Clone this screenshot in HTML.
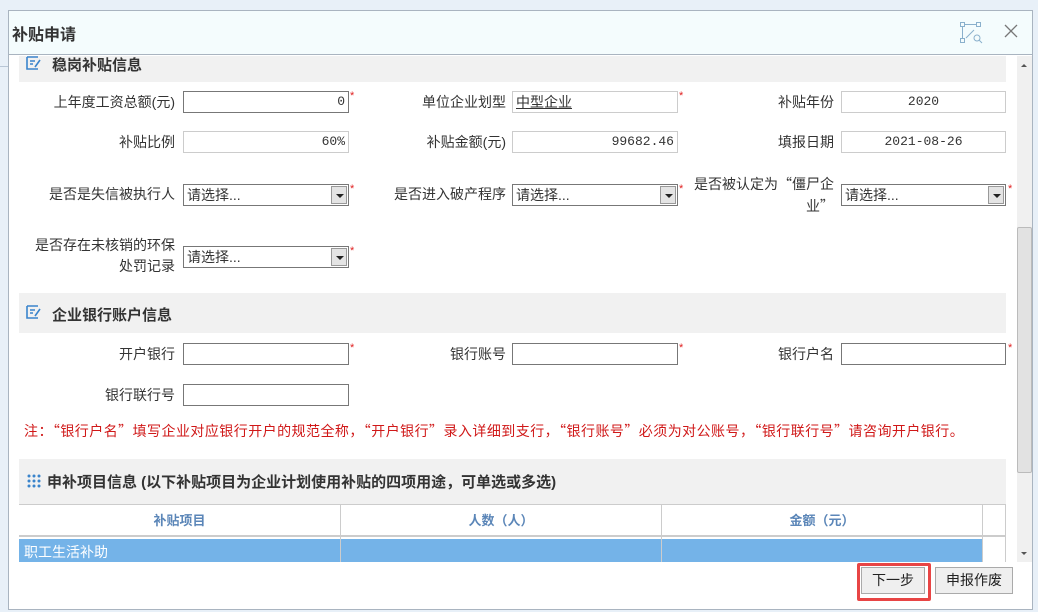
<!DOCTYPE html>
<html><head><meta charset="utf-8"><style>
*{margin:0;padding:0;box-sizing:border-box}
body{width:1038px;height:612px;overflow:hidden;background:#e8f0f8;font-family:"Liberation Sans","Noto Sans CJK SC",sans-serif;font-size:14px;color:#333;position:relative}
.a{position:absolute}
.dlg{left:8px;top:10px;width:1025px;height:600px;background:#fff;border:1px solid #a9b4c0}
.hd{left:9px;top:11px;width:1023px;height:44px;background:#f4fcfd;border-bottom:1px solid #a9b4c0}
.sec{background:#f1f1f1;left:19px;width:987px}
.st{font-weight:bold;font-size:15px;color:#333}
.lb{text-align:right;width:170px;line-height:22px}
.in{height:22px;border:1px solid #777;background:#fff;font-size:13px;line-height:20px;padding:0 3px;font-family:"Liberation Mono",monospace}
.ro{border-color:#ccc}
.sel{height:22px;border:1px solid #777;background:#fff;line-height:20px;padding-left:3px;font-size:14px}
.sel i{position:absolute;right:1px;top:1px;width:16px;height:18px;background:#e4e4e4;border:1px solid #999}
.sel i:after{content:"";position:absolute;left:4px;top:7px;border-left:4px solid transparent;border-right:4px solid transparent;border-top:4px solid #222}
.r{color:#e02020;font-size:11px}
.btn{height:27px;border:1px solid #aaa;background:#efefef;text-align:center;line-height:25px;font-size:14px;color:#222}
.cjk{font-family:"Noto Sans CJK SC","Liberation Sans",sans-serif}
</style></head><body>
<div class="a" style="left:0;top:66px;width:8px;height:1px;background:#b8c6d6"></div>
<div class="a dlg"></div>
<div class="a hd"></div>
<div class="a st" style="left:12px;top:21px;font-size:16px">补贴申请</div>
<svg class="a" style="left:958px;top:20px" width="26" height="26" viewBox="0 0 26 26" fill="none" stroke="#8ab0cc" stroke-width="1"><rect x="2.5" y="2.5" width="4" height="4"/><rect x="18.5" y="2.5" width="4" height="4"/><rect x="2.5" y="18.5" width="4" height="4"/><path d="M7 4.5h11M4.5 7v11M8 18l8-8"/><circle cx="19" cy="18" r="3"/><path d="M21 20l3 3"/></svg>
<svg class="a" style="left:1004px;top:24px" width="14" height="14" viewBox="0 0 14 14" stroke="#777" stroke-width="1.3"><path d="M1 1l12 12M13 1L1 13"/></svg>
<div class="a" style="left:1017px;top:56px;width:15px;height:506px;background:#f0f0f0"></div>
<div class="a" style="left:1017px;top:227px;width:15px;height:246px;background:#e2e2e2;border:1px solid #bbb;border-radius:2px"></div>
<div class="a" style="left:1021px;top:64px;border-left:3px solid transparent;border-right:3px solid transparent;border-bottom:3px solid #555"></div>
<div class="a" style="left:1021px;top:552px;border-left:3px solid transparent;border-right:3px solid transparent;border-top:3px solid #555"></div>
<div class="a sec" style="top:56px;height:26px"></div>
<svg class="a" style="left:26px;top:56px" width="16" height="14" viewBox="0 0 16 14" fill="none" stroke="#3a84cc" stroke-width="1.6"><path d="M1 1h11M1 1v12h11M4 5h5M4 8h3M9 11l5-7"/></svg>
<div class="a st" style="left:52px;top:54px">稳岗补贴信息</div>

<div class="a lb" style="left:5px;top:91px">上年度工资总额(元)</div>
<div class="a in" style="left:183px;top:91px;width:166px;text-align:right">0</div><span class="a r" style="left:350px;top:90px">*</span>
<div class="a lb" style="left:336px;top:91px">单位企业划型</div>
<div class="a in ro" style="left:512px;top:91px;width:166px;font-size:14px;text-decoration:underline;font-family:'Liberation Sans','Noto Sans CJK SC',sans-serif">中型企业</div><span class="a r" style="left:679px;top:90px">*</span>
<div class="a lb" style="left:664px;top:91px">补贴年份</div>
<div class="a in ro" style="left:841px;top:91px;width:165px;text-align:center">2020</div>

<div class="a lb" style="left:5px;top:131px">补贴比例</div>
<div class="a in ro" style="left:183px;top:131px;width:166px;text-align:right">60%</div>
<div class="a lb" style="left:336px;top:131px">补贴金额(元)</div>
<div class="a in ro" style="left:512px;top:131px;width:166px;text-align:right">99682.46</div>
<div class="a lb" style="left:664px;top:131px">填报日期</div>
<div class="a in ro" style="left:841px;top:131px;width:165px;text-align:center">2021-08-26</div>

<div class="a lb" style="left:5px;top:183px">是否是失信被执行人</div>
<div class="a sel" style="left:183px;top:184px;width:166px">请选择...<i></i></div><span class="a r" style="left:350px;top:183px">*</span>
<div class="a lb" style="left:336px;top:183px">是否进入破产程序</div>
<div class="a sel" style="left:512px;top:184px;width:166px">请选择...<i></i></div><span class="a r" style="left:679px;top:183px">*</span>
<div class="a lb cjk" style="left:691px;top:173px;line-height:22px;width:143px">是否被认定为“僵尸企业”</div>
<div class="a sel" style="left:841px;top:184px;width:165px">请选择...<i></i></div><span class="a r" style="left:1008px;top:183px">*</span>

<div class="a lb" style="left:33px;top:235px;line-height:21px;width:142px">是否存在未核销的环保处罚记录</div>
<div class="a sel" style="left:183px;top:246px;width:166px">请选择...<i></i></div><span class="a r" style="left:350px;top:245px">*</span>

<div class="a sec" style="top:293px;height:40px"></div>
<svg class="a" style="left:26px;top:305px" width="16" height="14" viewBox="0 0 16 14" fill="none" stroke="#3a84cc" stroke-width="1.6"><path d="M1 1h11M1 1v12h11M4 5h5M4 8h3M9 11l5-7"/></svg>
<div class="a st" style="left:52px;top:304px">企业银行账户信息</div>

<div class="a lb" style="left:5px;top:343px">开户银行</div>
<div class="a in" style="left:183px;top:343px;width:166px"></div><span class="a r" style="left:350px;top:342px">*</span>
<div class="a lb" style="left:336px;top:343px">银行账号</div>
<div class="a in" style="left:512px;top:343px;width:166px"></div><span class="a r" style="left:679px;top:342px">*</span>
<div class="a lb" style="left:664px;top:343px">银行户名</div>
<div class="a in" style="left:841px;top:343px;width:165px"></div><span class="a r" style="left:1008px;top:342px">*</span>
<div class="a lb" style="left:5px;top:384px">银行联行号</div>
<div class="a in" style="left:183px;top:384px;width:166px"></div>

<div class="a cjk" style="left:24px;top:421px;color:#d01818;line-height:20px;white-space:nowrap;letter-spacing:0.45px">注：“银行户名”填写企业对应银行开户的规范全称，“开户银行”录入详细到支行，“银行账号”必须为对公账号，“银行联行号”请咨询开户银行。</div>

<div class="a sec" style="top:459px;height:45px"></div>
<svg class="a" style="left:27px;top:474px" width="14" height="14" viewBox="0 0 14 14" fill="#3a84cc"><circle cx="2" cy="2" r="1.5"/><circle cx="7" cy="2" r="1.5"/><circle cx="12" cy="2" r="1.5"/><circle cx="2" cy="7" r="1.5"/><circle cx="7" cy="7" r="1.5"/><circle cx="12" cy="7" r="1.5"/><circle cx="2" cy="12" r="1.5"/><circle cx="7" cy="12" r="1.5"/><circle cx="12" cy="12" r="1.5"/></svg>
<div class="a st" style="left:47px;top:471px">申补项目信息 (以下补贴项目为企业计划使用补贴的四项用途，可单选或多选)</div>

<div class="a" style="left:19px;top:504px;width:987px;height:33px;background:#fff;border-top:1px solid #ccc;border-bottom:2px solid #ccc"></div>
<div class="a" style="left:340px;top:504px;width:1px;height:58px;background:#ccc"></div>
<div class="a" style="left:661px;top:504px;width:1px;height:58px;background:#ccc"></div>
<div class="a" style="left:982px;top:504px;width:1px;height:58px;background:#ccc"></div>
<div class="a" style="left:1005px;top:504px;width:1px;height:58px;background:#ccc"></div>
<div class="a cjk" style="left:19px;top:504px;width:321px;text-align:center;line-height:32px;font-weight:bold;color:#5b86b8;font-size:13px">补贴项目</div>
<div class="a cjk" style="left:341px;top:504px;width:320px;text-align:center;line-height:32px;font-weight:bold;color:#5b86b8;font-size:13px">人数（人）</div>
<div class="a cjk" style="left:662px;top:504px;width:320px;text-align:center;line-height:32px;font-weight:bold;color:#5b86b8;font-size:13px">金额（元）</div>
<div class="a" style="left:19px;top:539px;width:963px;height:23px;background:#74b3e8"></div>
<div class="a" style="left:340px;top:539px;width:1px;height:23px;background:#ccc"></div>
<div class="a" style="left:661px;top:539px;width:1px;height:23px;background:#ccc"></div>
<div class="a" style="left:24px;top:542px;color:#fff;line-height:20px">职工生活补助</div>

<div class="a btn" style="left:861px;top:567px;width:64px">下一步</div>
<div class="a" style="left:857px;top:563px;width:74px;height:38px;border:3px solid #e84545;border-radius:2px"></div>
<div class="a btn" style="left:935px;top:567px;width:78px">申报作废</div>
</body></html>
